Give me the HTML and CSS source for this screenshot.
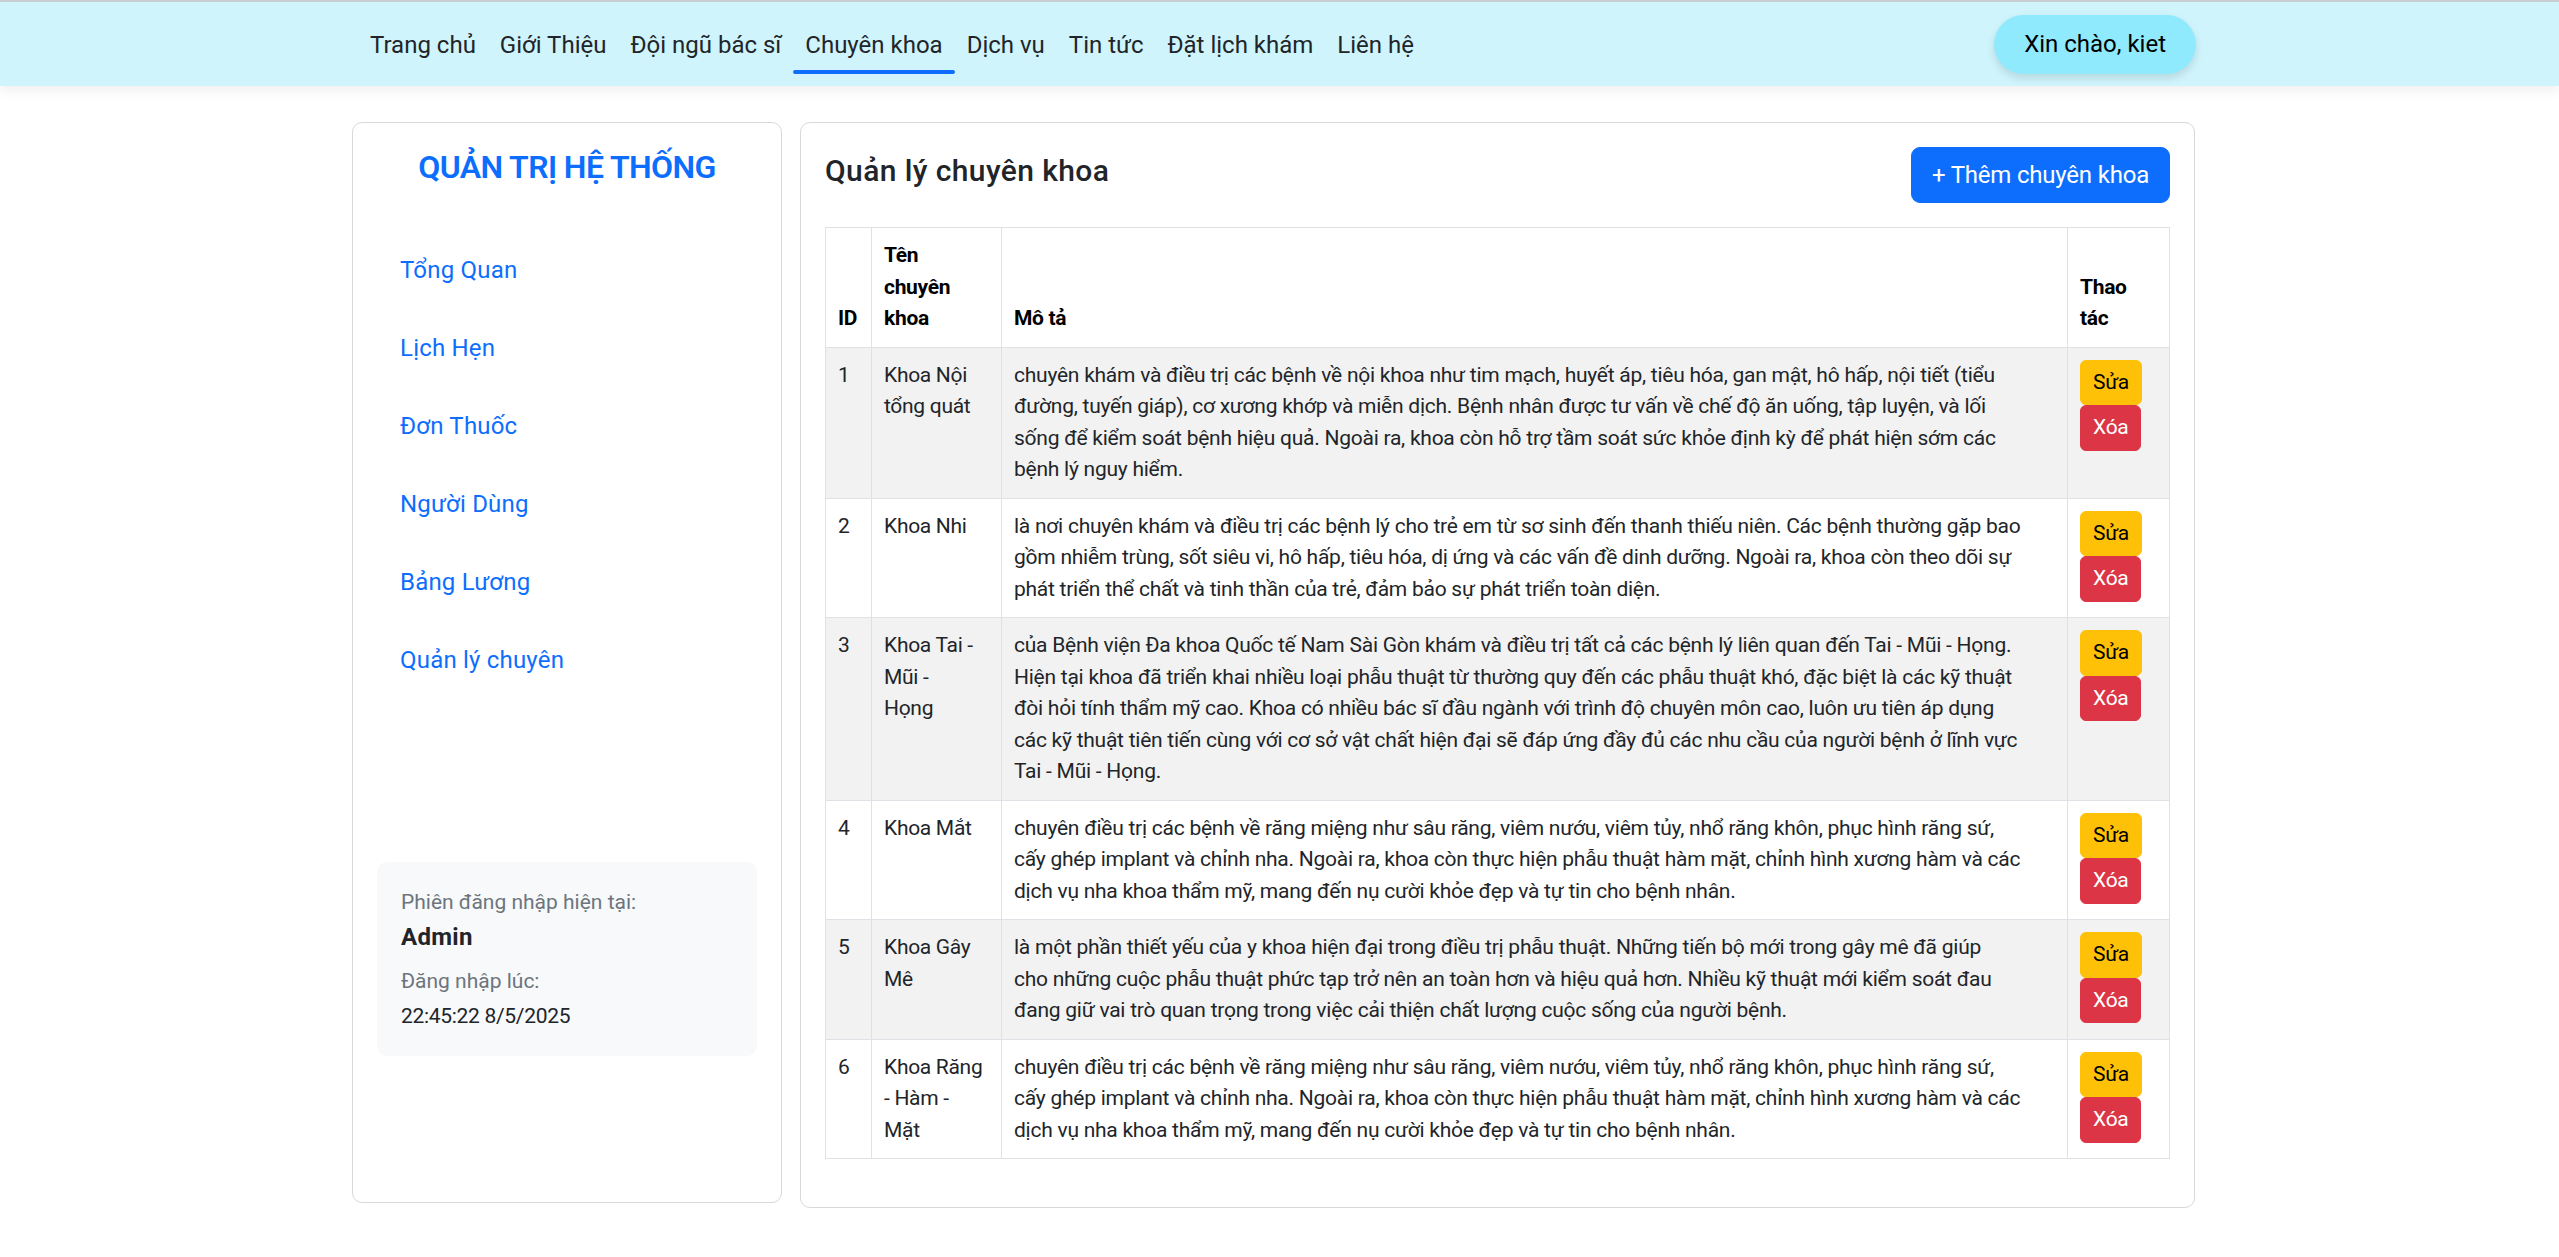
FILE: index.html
```html
<!DOCTYPE html>
<html lang="vi">
<head>
<meta charset="utf-8">
<title>Quản lý chuyên khoa</title>
<link rel="stylesheet" href="styles.css">
</head>
<body>
<header class="topbar">
  <div class="topbar-inner">
    <nav class="menu">
      <a class="menu-link" href="#">Trang chủ</a>
      <a class="menu-link" href="#">Giới Thiệu</a>
      <a class="menu-link" href="#">Đội ngũ bác sĩ</a>
      <a class="menu-link active" href="#">Chuyên khoa</a>
      <a class="menu-link" href="#">Dịch vụ</a>
      <a class="menu-link" href="#">Tin tức</a>
      <a class="menu-link" href="#">Đặt lịch khám</a>
      <a class="menu-link" href="#">Liên hệ</a>
    </nav>
    <div class="greet">Xin chào, kiet</div>
  </div>
</header>

<main class="layout">
  <aside class="side">
    <h2 class="side-title">QUẢN TRỊ HỆ THỐNG</h2>
    <ul class="side-menu">
      <li><a href="#">Tổng Quan</a></li>
      <li><a href="#">Lịch Hẹn</a></li>
      <li><a href="#">Đơn Thuốc</a></li>
      <li><a href="#">Người Dùng</a></li>
      <li><a href="#">Bảng Lương</a></li>
      <li><a href="#">Quản lý chuyên</a></li>
    </ul>
    <div class="session">
      <p class="session-label">Phiên đăng nhập hiện tại:</p>
      <p class="session-user">Admin</p>
      <p class="session-label session-gap">Đăng nhập lúc:</p>
      <p class="session-time">22:45:22 8/5/2025</p>
    </div>
  </aside>

  <section class="panel">
    <div class="panel-head">
      <h4 class="panel-title">Quản lý chuyên khoa</h4>
      <button class="btn-add" type="button">+ Thêm chuyên khoa</button>
    </div>
    <table class="grid">
      <colgroup>
        <col class="c-id"><col class="c-name"><col class="c-desc"><col class="c-act">
      </colgroup>
      <thead>
        <tr>
          <th>ID</th>
          <th>Tên<br>chuyên<br>khoa</th>
          <th>Mô tả</th>
          <th>Thao<br>tác</th>
        </tr>
      </thead>
      <tbody>
        <tr class="odd">
          <td>1</td>
          <td>Khoa Nội<br>tổng quát</td>
          <td class="desc">chuyên khám và điều trị các bệnh về nội khoa như tim mạch, huyết áp, tiêu hóa, gan mật, hô hấp, nội tiết (tiểu<br>đường, tuyến giáp), cơ xương khớp và miễn dịch. Bệnh nhân được tư vấn về chế độ ăn uống, tập luyện, và lối<br>sống để kiểm soát bệnh hiệu quả. Ngoài ra, khoa còn hỗ trợ tầm soát sức khỏe định kỳ để phát hiện sớm các<br>bệnh lý nguy hiểm.</td>
          <td><div class="actions"><button class="btn-edit" type="button">Sửa</button><button class="btn-del" type="button">Xóa</button></div></td>
        </tr>
        <tr>
          <td>2</td>
          <td>Khoa Nhi</td>
          <td class="desc">là nơi chuyên khám và điều trị các bệnh lý cho trẻ em từ sơ sinh đến thanh thiếu niên. Các bệnh thường gặp bao<br>gồm nhiễm trùng, sốt siêu vi, hô hấp, tiêu hóa, dị ứng và các vấn đề dinh dưỡng. Ngoài ra, khoa còn theo dõi sự<br>phát triển thể chất và tinh thần của trẻ, đảm bảo sự phát triển toàn diện.</td>
          <td><div class="actions"><button class="btn-edit" type="button">Sửa</button><button class="btn-del" type="button">Xóa</button></div></td>
        </tr>
        <tr class="odd">
          <td>3</td>
          <td>Khoa Tai -<br>Mũi -<br>Họng</td>
          <td class="desc">của Bệnh viện Đa khoa Quốc tế Nam Sài Gòn khám và điều trị tất cả các bệnh lý liên quan đến Tai - Mũi - Họng.<br>Hiện tại khoa đã triển khai nhiều loại phẫu thuật từ thường quy đến các phẫu thuật khó, đặc biệt là các kỹ thuật<br>đòi hỏi tính thẩm mỹ cao. Khoa có nhiều bác sĩ đầu ngành với trình độ chuyên môn cao, luôn ưu tiên áp dụng<br>các kỹ thuật tiên tiến cùng với cơ sở vật chất hiện đại sẽ đáp ứng đầy đủ các nhu cầu của người bệnh ở lĩnh vực<br>Tai - Mũi - Họng.</td>
          <td><div class="actions"><button class="btn-edit" type="button">Sửa</button><button class="btn-del" type="button">Xóa</button></div></td>
        </tr>
        <tr>
          <td>4</td>
          <td>Khoa Mắt</td>
          <td class="desc">chuyên điều trị các bệnh về răng miệng như sâu răng, viêm nướu, viêm tủy, nhổ răng khôn, phục hình răng sứ,<br>cấy ghép implant và chỉnh nha. Ngoài ra, khoa còn thực hiện phẫu thuật hàm mặt, chỉnh hình xương hàm và các<br>dịch vụ nha khoa thẩm mỹ, mang đến nụ cười khỏe đẹp và tự tin cho bệnh nhân.</td>
          <td><div class="actions"><button class="btn-edit" type="button">Sửa</button><button class="btn-del" type="button">Xóa</button></div></td>
        </tr>
        <tr class="odd">
          <td>5</td>
          <td>Khoa Gây<br>Mê</td>
          <td class="desc">là một phần thiết yếu của y khoa hiện đại trong điều trị phẫu thuật. Những tiến bộ mới trong gây mê đã giúp<br>cho những cuộc phẫu thuật phức tạp trở nên an toàn hơn và hiệu quả hơn. Nhiều kỹ thuật mới kiểm soát đau<br>đang giữ vai trò quan trọng trong việc cải thiện chất lượng cuộc sống của người bệnh.</td>
          <td><div class="actions"><button class="btn-edit" type="button">Sửa</button><button class="btn-del" type="button">Xóa</button></div></td>
        </tr>
        <tr>
          <td>6</td>
          <td>Khoa Răng<br>- Hàm -<br>Mặt</td>
          <td class="desc">chuyên điều trị các bệnh về răng miệng như sâu răng, viêm nướu, viêm tủy, nhổ răng khôn, phục hình răng sứ,<br>cấy ghép implant và chỉnh nha. Ngoài ra, khoa còn thực hiện phẫu thuật hàm mặt, chỉnh hình xương hàm và các<br>dịch vụ nha khoa thẩm mỹ, mang đến nụ cười khỏe đẹp và tự tin cho bệnh nhân.</td>
          <td><div class="actions"><button class="btn-edit" type="button">Sửa</button><button class="btn-del" type="button">Xóa</button></div></td>
        </tr>
      </tbody>
    </table>
  </section>
</main>
</body>
</html>
```

FILE: styles.css
```css
* { box-sizing: border-box; }

html { background: #fff; }

body {
  margin: 0;
  min-height: 1916px;
  border-top: 2px solid #c9cdd1;
  font-family: Roboto, "Noto Sans", "Liberation Sans", sans-serif;
  color: #212529;
  background: #fff;
}

/* ---------- top bar ---------- */
.topbar {
  height: 84px;
  background: #cff4fc;
  box-shadow: 0 4px 12px rgba(0, 0, 0, 0.07);
  display: flex;
  align-items: center;
}

.topbar-inner {
  width: 1844px;
  margin-left: 352px;
  display: flex;
  align-items: center;
  justify-content: space-between;
}

.menu {
  display: flex;
  margin-left: 6px;
}

.menu-link {
  display: flex;
  flex-direction: column;
  padding: 13px 12px 0;
  font-size: 24px;
  line-height: 36px;
  letter-spacing: 0;
  color: #212529;
  text-decoration: none;
}

.menu-link::after {
  content: "";
  display: block;
  height: 4px;
  margin: 7px -12px 0;
  border-radius: 2px;
  background: transparent;
}

.menu-link.active::after { background: #0d6efd; }

.greet {
  height: 59px;
  line-height: 59px;
  padding: 0 30px;
  border-radius: 30px;
  background: #8feafd;
  box-shadow: 0 4px 8px rgba(0, 0, 0, 0.12);
  font-size: 24px;
  letter-spacing: 0;
  color: #000;
}

/* ---------- layout ---------- */
.layout {
  display: flex;
  align-items: flex-start;
  gap: 18px;
  margin: 36px 0 0 352px;
}

.side {
  width: 430px;
  height: 1081px;
  flex: none;
  border: 1px solid #d6d9dc;
  border-radius: 10px;
  padding: 25px 24px 0;
  background: #fff;
}

.side-title {
  margin: 0 0 45px;
  text-align: center;
  font-size: 32px;
  line-height: 38px;
  font-weight: 600;
  color: #0d6efd;
  letter-spacing: -0.6px;
}

.side-menu {
  list-style: none;
  margin: 0;
  padding: 0;
}

.side-menu a {
  display: block;
  padding: 21px 23px;
  font-size: 24px;
  line-height: 36px;
  color: #0d6efd;
  text-decoration: none;
  letter-spacing: 0.2px;
}

.session {
  margin-top: 163px;
  padding: 25px 24px 24px;
  border-radius: 10px;
  background: #f8f9fa;
}

.session p { margin: 0; }

.session-label {
  font-size: 21px;
  line-height: 31.5px;
  color: #6c757d;
  letter-spacing: 0;
}

.session-gap { margin-top: 11px !important; }

.session-user {
  font-size: 24px;
  line-height: 36px;
  font-weight: 700;
  letter-spacing: 0.3px;
  color: #212529;
}

.session-time {
  margin-top: 3.5px !important;
  font-size: 21px;
  line-height: 31.5px;
  color: #212529;
  letter-spacing: -0.3px;
}

/* ---------- panel ---------- */
.panel {
  width: 1395px;
  flex: none;
  border: 1px solid #d6d9dc;
  border-radius: 10px;
  padding: 24px;
  background: #fff;
}

.panel-head {
  display: flex;
  align-items: center;
  justify-content: space-between;
  margin-bottom: 24px;
}

.panel-title {
  margin: 0 0 9px;
  font-size: 30px;
  line-height: 36px;
  font-weight: 500;
  letter-spacing: 0.4px;
  color: #212529;
}

.btn-add {
  height: 56px;
  padding: 0 20px;
  border: 1px solid #0d6efd;
  border-radius: 9px;
  background: #0d6efd;
  color: #fff;
  font-family: inherit;
  font-size: 24px;
  line-height: 36px;
  letter-spacing: -0.2px;
}

/* ---------- table ---------- */
.grid {
  width: 1344px;
  margin-bottom: 24px;
  table-layout: fixed;
  border-collapse: collapse;
  font-size: 21px;
  line-height: 31.5px;
  letter-spacing: -0.3px;
}

.c-id { width: 46px; }
.c-name { width: 130px; }
.c-desc { width: 1066px; }
.c-act { width: 102px; }

.grid th,
.grid td {
  border: 1px solid #dee2e6;
  padding: 12px;
  text-align: left;
}

.grid th {
  vertical-align: bottom;
  font-weight: 700;
  color: #000;
}

.grid td {
  vertical-align: top;
  color: #212529;
}

.grid td.desc {
  white-space: nowrap;
  letter-spacing: -0.25px;
}

.grid tr.odd td { background: #f2f2f2; }

.actions {
  display: flex;
  flex-direction: column;
  align-items: flex-start;
}

.btn-edit,
.btn-del {
  padding: 6px 12px;
  border-radius: 6px;
  font-family: inherit;
  font-size: 21px;
  line-height: 31.5px;
  letter-spacing: -0.3px;
}

.btn-edit {
  border: 1px solid #ffc107;
  background: #ffc107;
  color: #000;
}

.btn-del {
  border: 1px solid #dc3545;
  background: #dc3545;
  color: #fff;
}
```
